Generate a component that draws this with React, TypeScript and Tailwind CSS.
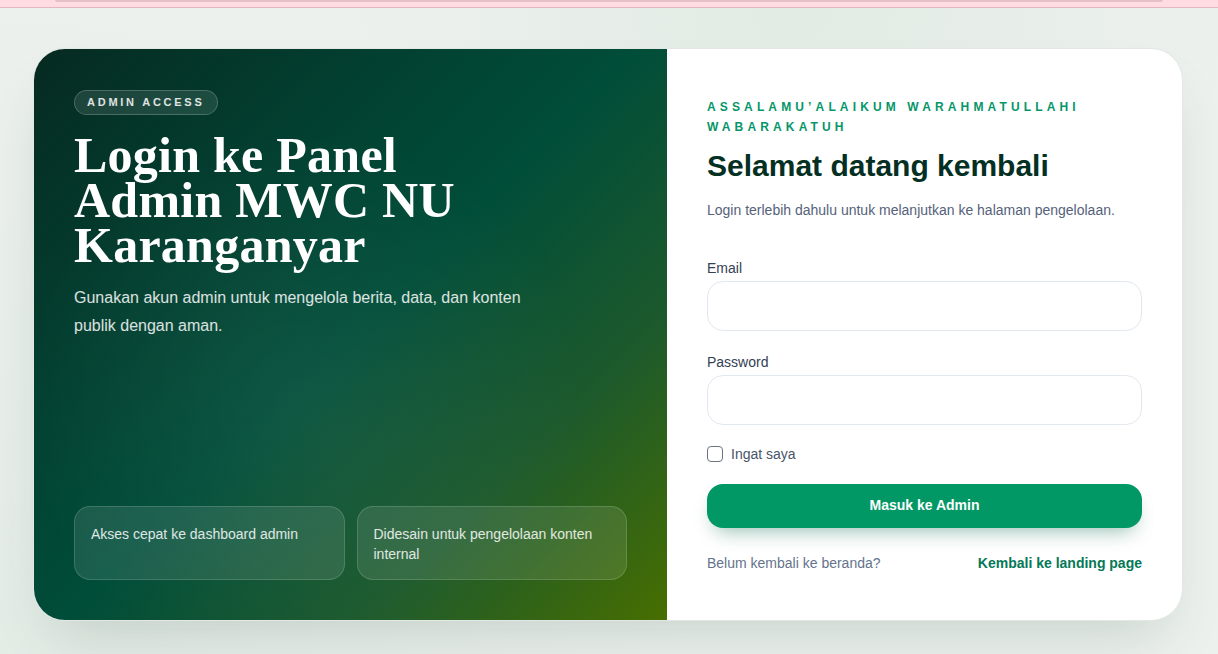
import { useState } from "react";

const FEATURES = [
  "Akses cepat ke dashboard admin",
  "Didesain untuk pengelolaan konten internal",
];

export default function App() {
  const [remember, setRemember] = useState(false);

  return (
    <div className="min-h-screen bg-[#edf1ee] bg-[radial-gradient(circle_at_65%_0%,#e2ebe4_0%,transparent_45%),radial-gradient(circle_at_0%_100%,#e4ece6_0%,transparent_50%)] font-['Liberation_Sans',Arial,sans-serif]">
      <div className="h-2 bg-[#ffdbe2] border-b border-[#e6b6c0] px-[55px]">
        <div className="mx-auto h-[2px] w-full rounded-b-full bg-[#e6c0c7]" />
      </div>

      <div className="pl-[33px] pr-[35px] pt-10 pb-8">
        <div className="flex h-[573px] w-[1150px] overflow-hidden rounded-[2rem] border border-[#e3e8e5] bg-white shadow-[0_30px_60px_-20px_rgba(15,60,40,0.18)]">
          {/* Left: intro panel */}
          <div className="relative flex w-[633px] shrink-0 flex-col justify-between bg-[linear-gradient(135deg,#062a21_0%,#023f30_28%,#004d39_50%,#1d5a2c_75%,#476e00_100%)] px-10 pt-10 pb-10">
            <div className="pointer-events-none absolute inset-0 bg-[radial-gradient(ellipse_at_42%_62%,rgba(255,255,255,0.06)_0%,transparent_55%)]" />
            <div className="relative">
              <span className="inline-flex h-[25px] items-center rounded-full border border-white/20 bg-white/10 px-3 text-[11px] font-bold uppercase tracking-[0.25em] text-white/85">
                Admin Access
              </span>
              <h1 className="mt-[18px] font-['Liberation_Serif','Times_New_Roman',serif] text-[50px] font-bold leading-[45px] tracking-[0.005em] text-white">
                Login ke Panel
                <br />
                Admin MWC NU
                <br />
                Karanganyar
              </h1>
              <p className="mt-[16px] max-w-md text-[16px] leading-[28px] text-white/85">
                Gunakan akun admin untuk mengelola berita, data, dan konten publik dengan aman.
              </p>
            </div>

            <div className="relative grid grid-cols-2 gap-3">
              {FEATURES.map((f) => (
                <div
                  key={f}
                  className="h-[74px] rounded-2xl border border-white/15 bg-white/10 px-4 pt-[17px] text-[14px] leading-5 text-white/85"
                >
                  {f}
                </div>
              ))}
            </div>
          </div>

          {/* Right: login form */}
          <div className="flex flex-1 flex-col justify-center px-10">
            <p className="text-[12px] font-bold uppercase leading-5 tracking-[0.345em] text-[#059669]">
              Assalamu’alaikum Warahmatullahi Wabarakatuh
            </p>
            <h2 className="mt-[11px] text-[30px] font-bold leading-9 text-[#042f23]">
              Selamat datang kembali
            </h2>
            <p className="mt-[16px] text-[14px] leading-5 text-[#55627a]">
              Login terlebih dahulu untuk melanjutkan ke halaman pengelolaan.
            </p>

            <form className="mt-[38px] flex flex-col" onSubmit={(e) => e.preventDefault()}>
              <label className="text-[14px] leading-5 text-[#334155]" htmlFor="email">
                Email
              </label>
              <input
                id="email"
                type="email"
                className="mt-[3px] h-[50px] w-full rounded-2xl border border-[#e2e8f0] bg-white px-4 text-[14px] outline-none"
              />

              <label className="mt-[21px] text-[14px] leading-5 text-[#334155]" htmlFor="password">
                Password
              </label>
              <input
                id="password"
                type="password"
                className="mt-[3px] h-[50px] w-full rounded-2xl border border-[#e2e8f0] bg-white px-4 text-[14px] outline-none"
              />

              <label className="mt-[19px] flex items-center gap-2 text-[14px] leading-5 text-[#475569]">
                <span
                  onClick={() => setRemember(!remember)}
                  className={`h-4 w-4 rounded-[4px] border border-[#6b7280] ${remember ? "bg-[#059669]" : "bg-white"}`}
                />
                Ingat saya
              </label>

              <button
                type="submit"
                className="mt-[20px] h-[44px] w-full rounded-2xl bg-[#019866] text-[14px] font-bold text-white shadow-[0_10px_20px_-8px_rgba(5,100,70,0.45)]"
              >
                Masuk ke Admin
              </button>

              <div className="mt-[25px] flex items-center justify-between text-[14px] leading-5">
                <span className="text-[#64748b]">Belum kembali ke beranda?</span>
                <a href="#" className="font-bold text-[#047857]">
                  Kembali ke landing page
                </a>
              </div>
            </form>
          </div>
        </div>
      </div>
    </div>
  );
}
